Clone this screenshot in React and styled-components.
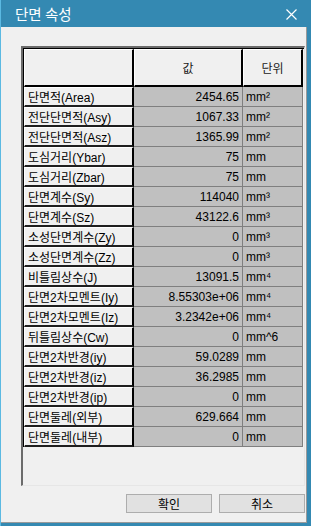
import React from 'react';
import styled, { createGlobalStyle } from 'styled-components';

const GlobalStyle = createGlobalStyle`
  html, body {
    margin: 0;
    padding: 0;
    background: #ffffff;
  }
  body {
    font-family: "Liberation Sans", "Noto Sans CJK KR", Arial, sans-serif;
  }
`;

const Window = styled.div`
  width: 311px;
  height: 526px;
  box-sizing: border-box;
  background: #3489b2;
  border-left: 1px solid #5bb9e2;
  padding: 0 4px 3px 0;
  display: flex;
  flex-direction: column;
`;

const TitleBar = styled.div`
  height: 27px;
  flex: none;
  display: flex;
  align-items: center;
  justify-content: space-between;
  padding: 0 10px 0 14px;
  color: #ffffff;
  font-family: "Noto Sans CJK KR", "Liberation Sans", sans-serif;
  font-size: 14.5px;
`;

const CloseButton = styled.div`
  width: 12px;
  height: 12px;
  display: flex;
  align-items: center;
  justify-content: center;
  margin-top: 2px;
`;

const Body = styled.div`
  flex: 1;
  box-sizing: border-box;
  background: #f0f0f0;
  border-right: 1px solid #9a9a9a;
  border-bottom: 1px solid #9a9a9a;
  padding: 19px 1px 0 20px;
  display: flex;
  flex-direction: column;
`;

const GridFrame = styled.div`
  width: 284px;
  height: 440px;
  box-sizing: border-box;
  border-top: 2px solid #6b6b6b;
  border-left: 2px solid #6b6b6b;
  border-right: 1px solid #e6e6e6;
  border-bottom: 1px solid #e6e6e6;
  background: #f0f0f0;
`;

const Table = styled.div`
  width: 280px;
  border-top: 1px solid #000000;
  border-left: 1px solid #000000;
  font-size: 12px;
  color: #000000;
`;

const Row = styled.div`
  display: grid;
  grid-template-columns: 110px 109px 60px;
  height: ${p => (p.$head ? 38 : 20)}px;
`;

const HeadCell = styled.div`
  box-sizing: border-box;
  background: #f0f0f0;
  border-top: 1px solid #ffffff;
  border-left: 1px solid #ffffff;
  border-right: 2px solid #000000;
  border-bottom: 2px solid #000000;
  display: flex;
  align-items: center;
  justify-content: center;
  font-family: "Noto Sans CJK KR", "Liberation Sans", sans-serif;
  font-size: 12px;
  color: #1a1a1a;
`;

const LabelCell = styled.div`
  box-sizing: border-box;
  background: #f0f0f0;
  border-top: 1px solid #ffffff;
  border-left: 1px solid #ffffff;
  border-right: 2px solid #000000;
  border-bottom: 2px solid #1e1e1e;
  display: flex;
  align-items: center;
  padding-left: 3px;
  font-family: "Liberation Sans", "Noto Sans CJK KR", sans-serif;
  font-size: 12px;
  white-space: nowrap;
  overflow: hidden;
`;

const DataCell = styled.div`
  box-sizing: border-box;
  background: #c0c0c0;
  border-right: 1px solid #7f7f7f;
  border-bottom: 1px solid #7f7f7f;
  display: flex;
  align-items: center;
  justify-content: ${p => (p.$right ? 'flex-end' : 'flex-start')};
  padding: ${p => (p.$right ? '0 3px 0 0' : '0 0 0 3px')};
  white-space: nowrap;
`;

const ButtonRow = styled.div`
  display: flex;
  justify-content: flex-end;
  gap: 7px;
  margin-top: 8px;
`;

const Button = styled.button`
  width: 86px;
  height: 19px;
  box-sizing: border-box;
  background: #e1e1e1;
  border: 1px solid #adadad;
  padding: 0;
  font-family: "Noto Sans CJK KR", "Liberation Sans", sans-serif;
  font-size: 12px;
  color: #000000;
  line-height: 1;
`;

const rows = [
  ['단면적(Area)', '2454.65', 'mm²'],
  ['전단단면적(Asy)', '1067.33', 'mm²'],
  ['전단단면적(Asz)', '1365.99', 'mm²'],
  ['도심거리(Ybar)', '75', 'mm'],
  ['도심거리(Zbar)', '75', 'mm'],
  ['단면계수(Sy)', '114040', 'mm³'],
  ['단면계수(Sz)', '43122.6', 'mm³'],
  ['소성단면계수(Zy)', '0', 'mm³'],
  ['소성단면계수(Zz)', '0', 'mm³'],
  ['비틀림상수(J)', '13091.5', 'mm⁴'],
  ['단면2차모멘트(Iy)', '8.55303e+06', 'mm⁴'],
  ['단면2차모멘트(Iz)', '3.2342e+06', 'mm⁴'],
  ['뒤틀림상수(Cw)', '0', 'mm^6'],
  ['단면2차반경(iy)', '59.0289', 'mm'],
  ['단면2차반경(iz)', '36.2985', 'mm'],
  ['단면2차반경(ip)', '0', 'mm'],
  ['단면둘레(외부)', '629.664', 'mm'],
  ['단면둘레(내부)', '0', 'mm'],
];

const App = () => (
  <>
    <GlobalStyle />
    <Window>
      <TitleBar>
        <span>단면 속성</span>
        <CloseButton>
          <svg width="11" height="11" viewBox="0 0 11 11">
            <path d="M0.5 0.5 L10.5 10.5 M10.5 0.5 L0.5 10.5" stroke="#ffffff" strokeWidth="1.2" fill="none" />
          </svg>
        </CloseButton>
      </TitleBar>
      <Body>
        <GridFrame>
          <Table>
            <Row $head>
              <HeadCell />
              <HeadCell>값</HeadCell>
              <HeadCell>단위</HeadCell>
            </Row>
            {rows.map(([label, value, unit]) => (
              <Row key={label}>
                <LabelCell>{label}</LabelCell>
                <DataCell $right>{value}</DataCell>
                <DataCell>{unit}</DataCell>
              </Row>
            ))}
          </Table>
        </GridFrame>
        <ButtonRow>
          <Button>확인</Button>
          <Button>취소</Button>
        </ButtonRow>
      </Body>
    </Window>
  </>
);

export default App;
